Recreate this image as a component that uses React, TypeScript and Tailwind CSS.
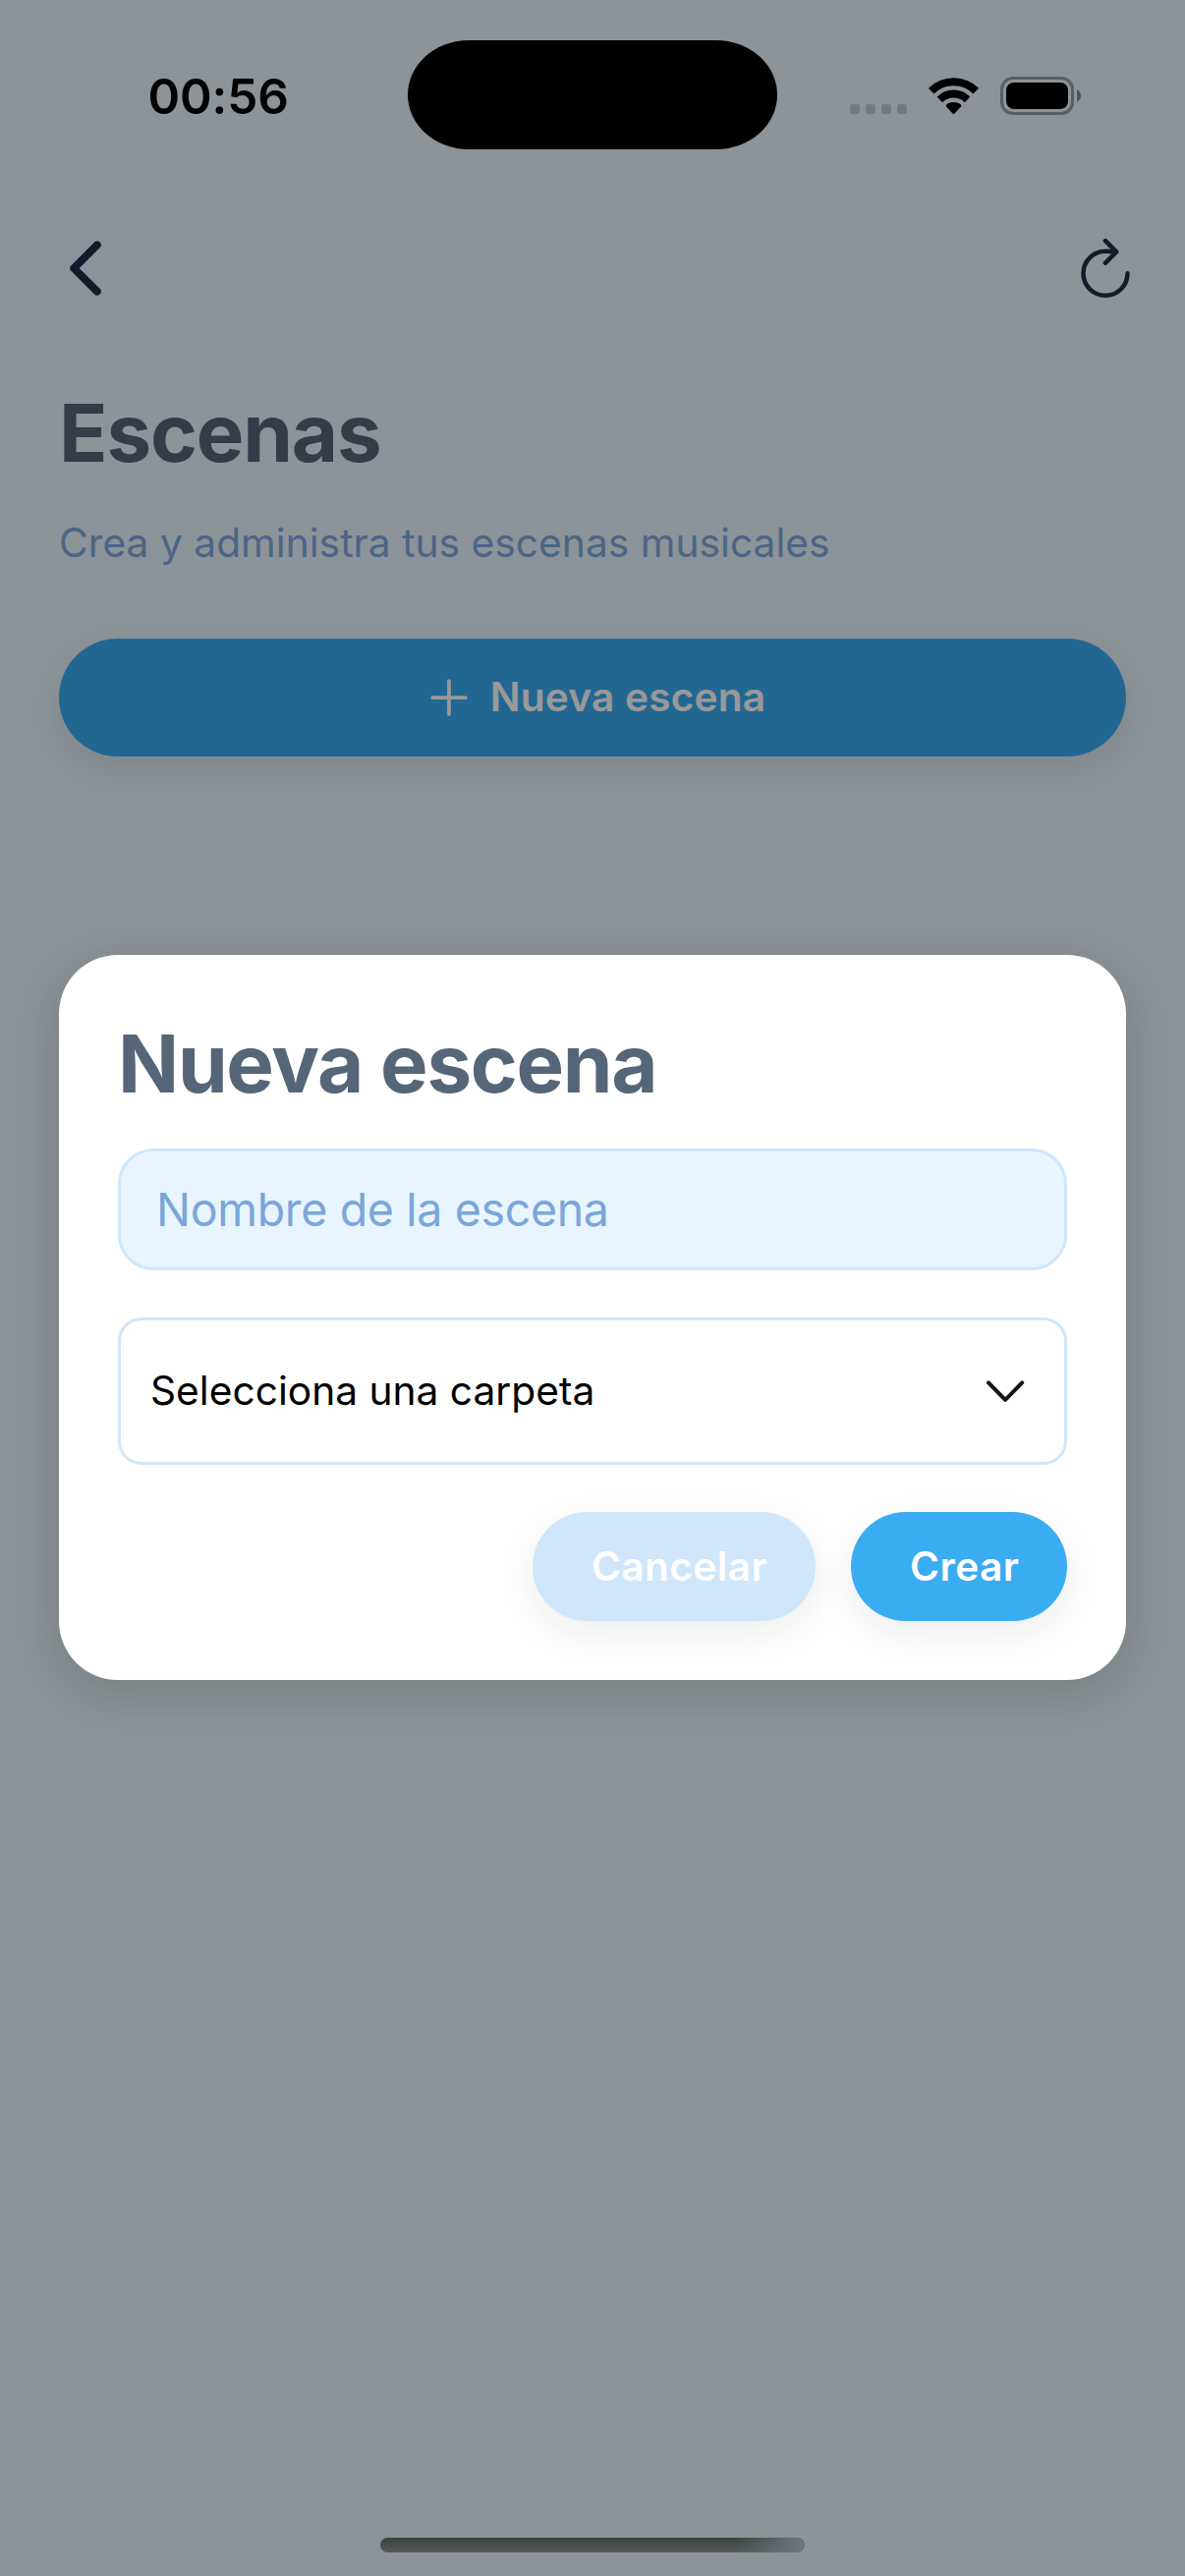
const SIGNAL_DOTS = [0, 1, 2, 3];

function WifiIcon() {
  return (
    <svg width="51" height="38" viewBox="0 0 51 38" fill="none" stroke="#000" strokeWidth="8">
      <path d="M2.7 13.7a32.2 32.2 0 0 1 45.6 0" />
      <path d="M11.4 22.4a20 20 0 0 1 28.2 0" />
      <path d="M17.5 28.9Q18 26.9 20.5 26.1Q25.5 24.1 30.5 26.1Q33 26.9 33.5 28.9L26.5 36.5Q25.5 37.5 24.5 36.5Z" fill="#000" stroke="none" />
    </svg>
  );
}

function BatteryIcon() {
  return (
    <svg width="82" height="39" viewBox="0 0 82 39" fill="none">
      <rect x="1.5" y="1.5" width="72" height="36" rx="11.5" stroke="#595f61" strokeWidth="3" />
      <rect x="6" y="6" width="63" height="27" rx="8" fill="#000" />
      <path d="M78 13.3c2.6 1.2 4 3.4 4 6.2s-1.4 5-4 6.2z" fill="#4d5356" />
    </svg>
  );
}

function BackIcon() {
  return (
    <svg width="84" height="84" viewBox="0 0 512 512" fill="none" stroke="#232b43" strokeLinecap="round" strokeLinejoin="round" strokeWidth="48">
      <path d="M328 112L184 256l144 144" />
    </svg>
  );
}

function RefreshIcon() {
  return (
    <svg width="72" height="72" viewBox="0 0 512 512" fill="none" stroke="#232b43" strokeLinecap="round" strokeWidth="32">
      <path d="M320 146s24.36-12-64-12a160 160 0 10160 160" strokeMiterlimit="10" />
      <path d="M256 58l80 80-80 80" strokeLinejoin="round" />
    </svg>
  );
}

function AddIcon() {
  return (
    <svg width="60" height="60" viewBox="0 0 512 512" fill="none" stroke="#fff" strokeLinecap="round" strokeLinejoin="round" strokeWidth="32">
      <path d="M256 112v288M400 256H112" />
    </svg>
  );
}

function ChevronDownIcon() {
  return (
    <svg width="40" height="24" viewBox="0 0 40 24" fill="none" stroke="#141616" strokeLinecap="round" strokeLinejoin="round" strokeWidth="4">
      <path d="M3 3.4L20.1 20.8L37.2 3.4" />
    </svg>
  );
}

function StatusBar() {
  return (
    <div className="absolute inset-x-0 top-0 flex h-[195px] items-center">
      <div className="ml-[150.5px] w-[264.5px] text-[49.5px] leading-[60px] font-semibold tracking-[-0.13px]">00:56</div>
      <div className="mb-[2px] h-[111px] w-[376px] rounded-[62px/55.5px] bg-black" />
      <div className="ml-[74px] flex items-center">
        <div className="mt-[27px] flex gap-[6px]">
          {SIGNAL_DOTS.map((dot) => (
            <div key={dot} className="size-[10px] rounded-[3px] bg-[#74797c]" />
          ))}
        </div>
        <div className="ml-[22px]">
          <WifiIcon />
        </div>
        <div className="ml-[22px]">
          <BatteryIcon />
        </div>
      </div>
    </div>
  );
}

function ScenesPage() {
  return (
    <div className="flex h-full flex-col bg-[#e9f5ff] px-[60px] pt-[231px]">
      <header className="-mr-[15px] -ml-[15px] flex h-[84px] items-center justify-between">
        <BackIcon />
        <RefreshIcon />
      </header>
      <h1 className="mt-[76px] text-[81.6px] leading-[100px] font-bold tracking-[-1.16px] text-[#556678]">Escenas</h1>
      <p className="mt-[37px] text-[40.7px] leading-[50px] tracking-[0.03px] text-[#7da9e0]">
        Crea y administra tus escenas musicales
      </p>
      <button className="mt-[72px] flex h-[120px] items-center justify-center gap-[12px] rounded-full bg-[#3aacf2] text-[40.7px] font-semibold tracking-[0.17px] text-white shadow-[0_12px_36px_rgba(20,30,0,0.09)]">
        <AddIcon />
        Nueva escena
      </button>
    </div>
  );
}

function NewSceneDialog() {
  return (
    <div className="flex w-[1086px] flex-col rounded-[60px] bg-white p-[60px] shadow-[0_12px_48px_rgba(20,30,0,0.18)]">
      <h2 className="pt-px text-[81.6px] leading-[100px] font-bold tracking-[-1.31px] text-[#556678]">Nueva escena</h2>
      <div className="mt-[36px] flex h-[124px] items-center rounded-[36px] border-[3px] border-[#cfe6fb] bg-[#e8f5ff] pt-[2px] pl-[36px] text-[46.5px] tracking-[-0.34px] text-[#7ba6da]">
        Nombre de la escena
      </div>
      <div className="mt-[48px] flex h-[150px] items-center justify-between rounded-[24px] border-[3px] border-[#cfe6fb] pr-[40px] pl-[30px] text-[40.7px] text-black">
        Selecciona una carpeta
        <ChevronDownIcon />
      </div>
      <div className="mt-[48px] flex justify-end gap-[36px] text-[40.7px] font-semibold text-white">
        <button className="h-[111px] w-[288px] rounded-full bg-[#cfe6fb] pl-[60px] text-left tracking-[0.34px] shadow-[0_12px_36px_rgba(0,20,30,0.08)]">
          Cancelar
        </button>
        <button className="h-[111px] w-[220px] rounded-full bg-[#3aacf2] pl-[60px] text-left tracking-[0.45px] shadow-[0_12px_36px_rgba(0,20,30,0.08)]">
          Crear
        </button>
      </div>
    </div>
  );
}

export default function App() {
  return (
    <div className="relative h-[2622px] w-[1206px] overflow-hidden font-['Inter','Liberation_Sans',sans-serif] text-black">
      <ScenesPage />
      <div className="absolute inset-0 flex flex-col items-center bg-black/40 pt-[972px]">
        <NewSceneDialog />
      </div>
      <StatusBar />
      <div className="absolute bottom-[24px] left-[387px] h-[15px] w-[432px] overflow-hidden rounded-full bg-linear-to-b from-[#3c4241] to-[#54585b]">
        <div className="ml-auto h-full w-[70px] bg-linear-to-r from-transparent to-[#70767a]" />
      </div>
    </div>
  );
}
